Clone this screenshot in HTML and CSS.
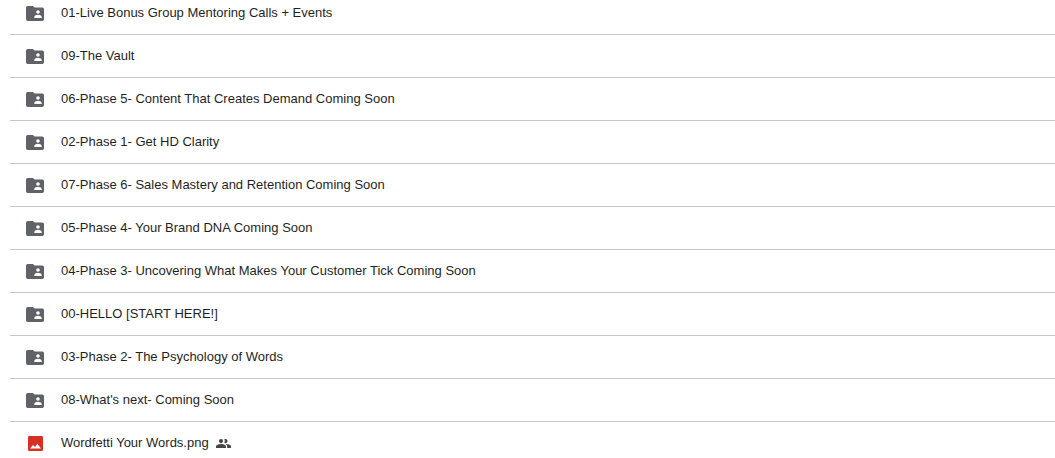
FILE: index.html
```html
<!DOCTYPE html>
<html lang="en">
  <head>
    <meta charset="UTF-8" />
    <meta name="viewport" content="width=device-width, initial-scale=1.0" />
    <title>Files</title>
    <link rel="stylesheet" href="styles.css" />
  </head>
  <body>
    <svg class="symbols" aria-hidden="true">
      <symbol id="folder" viewBox="0 0 18 15">
        <path fill-rule="evenodd" d="M1.8 0H7L8.6 1.5H16.3Q18 1.5 18 3.3V13.2Q18 15 16.2 15H1.8Q0 15 0 13.2V1.8Q0 0 1.8 0ZM12 4.2A1.8 1.8 0 1 0 12 7.8A1.8 1.8 0 1 0 12 4.2ZM8.3 12H15.7V10.9C15.7 9.5 13.3 8.7 12 8.7S8.3 9.5 8.3 10.9Z" />
      </symbol>
      <symbol id="image" viewBox="0 0 15 15">
        <path fill-rule="evenodd" d="M1.3 0H13.7Q15 0 15 1.3V13.7Q15 15 13.7 15H1.3Q0 15 0 13.7V1.3Q0 0 1.3 0ZM2 12.5H13L9.3 7.8L7 10.9L5 8.9Z" />
      </symbol>
      <symbol id="people" viewBox="0 0 15 9">
        <circle cx="5" cy="2.1" r="2.1" />
        <path d="M0 9V7.4C0 5.9 3 5 5 5S10 5.9 10 7.4V9ZM8.3 .3A2.1 2.1 0 1 1 8.3 3.9Q9.3 2.1 8.3 .3ZM9.6 5.1C11.8 5.1 15 5.9 15 7.4V9H11.2V7.4Q11.2 6 9.6 5.1Z" />
      </symbol>
    </svg>

    <ul class="file-list">
      <li><a class="file" href="#"><svg class="icon folder"><use href="#folder" /></svg><span>01-Live Bonus Group Mentoring Calls + Events</span></a></li>
      <li><a class="file" href="#"><svg class="icon folder"><use href="#folder" /></svg><span>09-The Vault</span></a></li>
      <li><a class="file" href="#"><svg class="icon folder"><use href="#folder" /></svg><span>06-Phase 5- Content That Creates Demand Coming Soon</span></a></li>
      <li><a class="file" href="#"><svg class="icon folder"><use href="#folder" /></svg><span>02-Phase 1- Get HD Clarity</span></a></li>
      <li><a class="file" href="#"><svg class="icon folder"><use href="#folder" /></svg><span>07-Phase 6- Sales Mastery and Retention Coming Soon</span></a></li>
      <li><a class="file" href="#"><svg class="icon folder"><use href="#folder" /></svg><span>05-Phase 4- Your Brand DNA Coming Soon</span></a></li>
      <li><a class="file" href="#"><svg class="icon folder"><use href="#folder" /></svg><span>04-Phase 3- Uncovering What Makes Your Customer Tick Coming Soon</span></a></li>
      <li><a class="file" href="#"><svg class="icon folder"><use href="#folder" /></svg><span>00-HELLO [START HERE!]</span></a></li>
      <li><a class="file" href="#"><svg class="icon folder"><use href="#folder" /></svg><span>03-Phase 2- The Psychology of Words</span></a></li>
      <li><a class="file" href="#"><svg class="icon folder"><use href="#folder" /></svg><span>08-What's next- Coming Soon</span></a></li>
      <li><a class="file" href="#"><svg class="icon image"><use href="#image" /></svg><span>Wordfetti Your Words.png</span><svg class="shared" role="img" aria-label="Shared"><use href="#people" /></svg></a></li>
    </ul>
  </body>
</html>
```
FILE: styles.css
```css
body {
  margin: 0;
  background: #fff;
  color: #1f1f1f;
  font-family: "Liberation Sans", Arial, sans-serif;
  font-size: 13px;
  line-height: 20px;
  overflow-x: hidden;
}
.symbols {
  display: none;
}
/* the list is scrolled a little, so the first row is cut off */
.file-list {
  list-style: none;
  margin: -8px 0 0 10px;
  padding: 0;
}
.file-list li {
  border-bottom: 1px solid #c7c7c7;
}
.file-list li:last-child {
  border-bottom: none;
}
.file {
  display: flex;
  align-items: center;
  padding: 11px 16px;
  color: inherit;
  text-decoration: none;
}
.icon {
  flex: none;
  height: 15px;
}
.folder {
  width: 18px;
  margin-right: 17px;
  fill: #5f6368;
}
.image {
  width: 15px;
  margin: 0 18px 0 2px;
  fill: #d93025;
}
.shared {
  width: 15px;
  height: 9px;
  margin-left: 7px;
  fill: #444746;
}
/* the last row runs past the bottom edge of a short window */
html {
  scrollbar-width: none;
}
```
